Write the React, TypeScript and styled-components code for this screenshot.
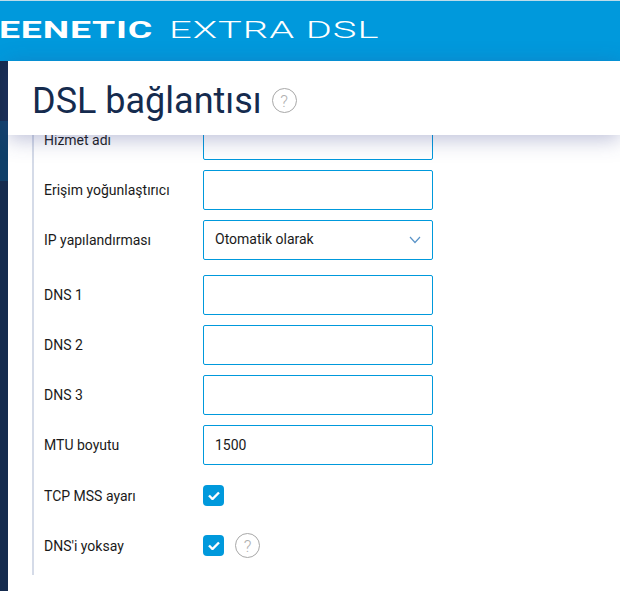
import React from "react";
import styled, { createGlobalStyle } from "styled-components";

const GlobalStyle = createGlobalStyle`
  html, body {
    margin: 0;
    padding: 0;
    height: 591px;
    overflow: hidden;
    background: #fff;
    font-family: Roboto, "Liberation Sans", sans-serif;
  }
  * { box-sizing: border-box; }
`;

const Page = styled.div`
  width: 620px;
  height: 591px;
  display: flex;
  flex-direction: column;
  overflow: hidden;
`;

const Header = styled.header`
  height: 61px;
  flex: none;
  background: #0099dc;
  border-top: 1px solid #bcdcea;
  display: flex;
  align-items: center;
  overflow: hidden;
  padding-bottom: 3px;
  color: #fff;
  white-space: nowrap;
`;

const Brand = styled.span`
  display: inline-block;
  font: 700 24px Roboto, sans-serif;
  letter-spacing: 0.5px;
  transform: scaleX(1.56);
  transform-origin: left center;
  width: 153px;
  margin-left: -1px;
`;

const Model = styled.span`
  display: inline-block;
  font: 300 24px Roboto, sans-serif;
  letter-spacing: 0.6px;
  transform: scaleX(1.66);
  transform-origin: left center;
  margin-left: 17px;
`;

const Body = styled.div`
  flex: 1;
  display: flex;
  position: relative;
  min-height: 0;
`;

const Sidebar = styled.nav`
  width: 8px;
  flex: none;
  background: #152b4e;
  padding-top: 60px;
`;

const ActiveItem = styled.div`
  height: 60px;
  background: #0f3f69;
`;

const TitleBar = styled.div`
  position: absolute;
  top: 0;
  left: 8px;
  right: 0;
  height: 74px;
  background: #fff;
  display: flex;
  align-items: center;
  gap: 10px;
  padding: 5px 0 0 24px;
  box-shadow: 0 4px 20px rgba(60, 70, 140, 0.35);
`;

const Title = styled.h1`
  margin: 0;
  font-size: 36px;
  font-weight: 400;
  color: #152b4e;
  line-height: 1;
`;

const Content = styled.main`
  flex: 1;
  padding: 59px 0 0 24px;
`;

const Form = styled.div`
  width: 410px;
  height: 455px;
  border-left: 2px solid #d5dbe8;
  padding-left: 10px;
  display: flex;
  flex-direction: column;
`;

const Row = styled.div<{ $gap?: number; $height?: number }>`
  display: flex;
  align-items: center;
  height: ${(p) => p.$height ?? 40}px;
  margin-bottom: ${(p) => p.$gap ?? 10}px;
`;

const Label = styled.label`
  width: 159px;
  flex: none;
  font-size: 14px;
  color: #1a1a1a;
`;

const Field = styled.div<{ $select?: boolean }>`
  width: 230px;
  height: 40px;
  border: 1px solid #0099dc;
  border-radius: 2px;
  padding: ${(p) => (p.$select ? "0 11px 2px" : "0 11px")};
  font-size: 14px;
  color: #1a1a1a;
  display: flex;
  align-items: center;
  justify-content: space-between;
`;

const Chevron = styled.svg`
  width: 12px;
  height: 8px;
  margin-top: 2px;
  fill: none;
  stroke: #5b94c8;
  stroke-width: 1.2;
`;

const Check = styled.div`
  width: 21px;
  height: 21px;
  border-radius: 4px;
  background: #0099dc;
  display: flex;
  align-items: center;
  justify-content: center;
`;

const CheckMark = styled.svg`
  width: 12px;
  height: 9px;
  fill: none;
  stroke: #fff;
  stroke-width: 2.4;
`;

const Help = styled.span<{ $left?: number }>`
  width: 25px;
  height: 25px;
  margin-left: ${(p) => p.$left ?? 0}px;
  border: 1px solid #a8a8a8;
  border-radius: 50%;
  display: inline-flex;
  align-items: center;
  justify-content: center;
  color: #b0b0b0;
  font-size: 17px;
  font-weight: 300;
  flex: none;
`;

const fields: { label: string; value?: string; gap?: number; select?: boolean }[] = [
  { label: "Hizmet adı" },
  { label: "Erişim yoğunlaştırıcı" },
  { label: "IP yapılandırması", value: "Otomatik olarak", gap: 15, select: true },
  { label: "DNS 1" },
  { label: "DNS 2" },
  { label: "DNS 3" },
  { label: "MTU boyutu", value: "1500", gap: 20 },
];

const Tick = () => (
  <Check>
    <CheckMark viewBox="0 0 12 9">
      <path d="M1 4.5 L4.5 8 L11 1.5" />
    </CheckMark>
  </Check>
);

export default function App() {
  return (
    <Page>
      <GlobalStyle />
      <Header>
        <Brand>EENETIC</Brand>
        <Model>EXTRA DSL</Model>
      </Header>
      <Body>
        <Sidebar>
          <ActiveItem />
        </Sidebar>
        <Content>
          <Form>
            {fields.map((f) => (
              <Row key={f.label} $gap={f.gap}>
                <Label>{f.label}</Label>
                <Field $select={f.select}>
                  {f.value}
                  {f.select && (
                    <Chevron viewBox="0 0 12 8">
                      <path d="M1 1 L6 6.5 L11 1" />
                    </Chevron>
                  )}
                </Field>
              </Row>
            ))}
            <Row $height={21} $gap={29}>
              <Label>TCP MSS ayarı</Label>
              <Tick />
            </Row>
            <Row $height={21} $gap={0}>
              <Label>DNS'i yoksay</Label>
              <Tick />
              <Help $left={11}>?</Help>
            </Row>
          </Form>
        </Content>
        <TitleBar>
          <Title>DSL bağlantısı</Title>
          <Help>?</Help>
        </TitleBar>
      </Body>
    </Page>
  );
}
